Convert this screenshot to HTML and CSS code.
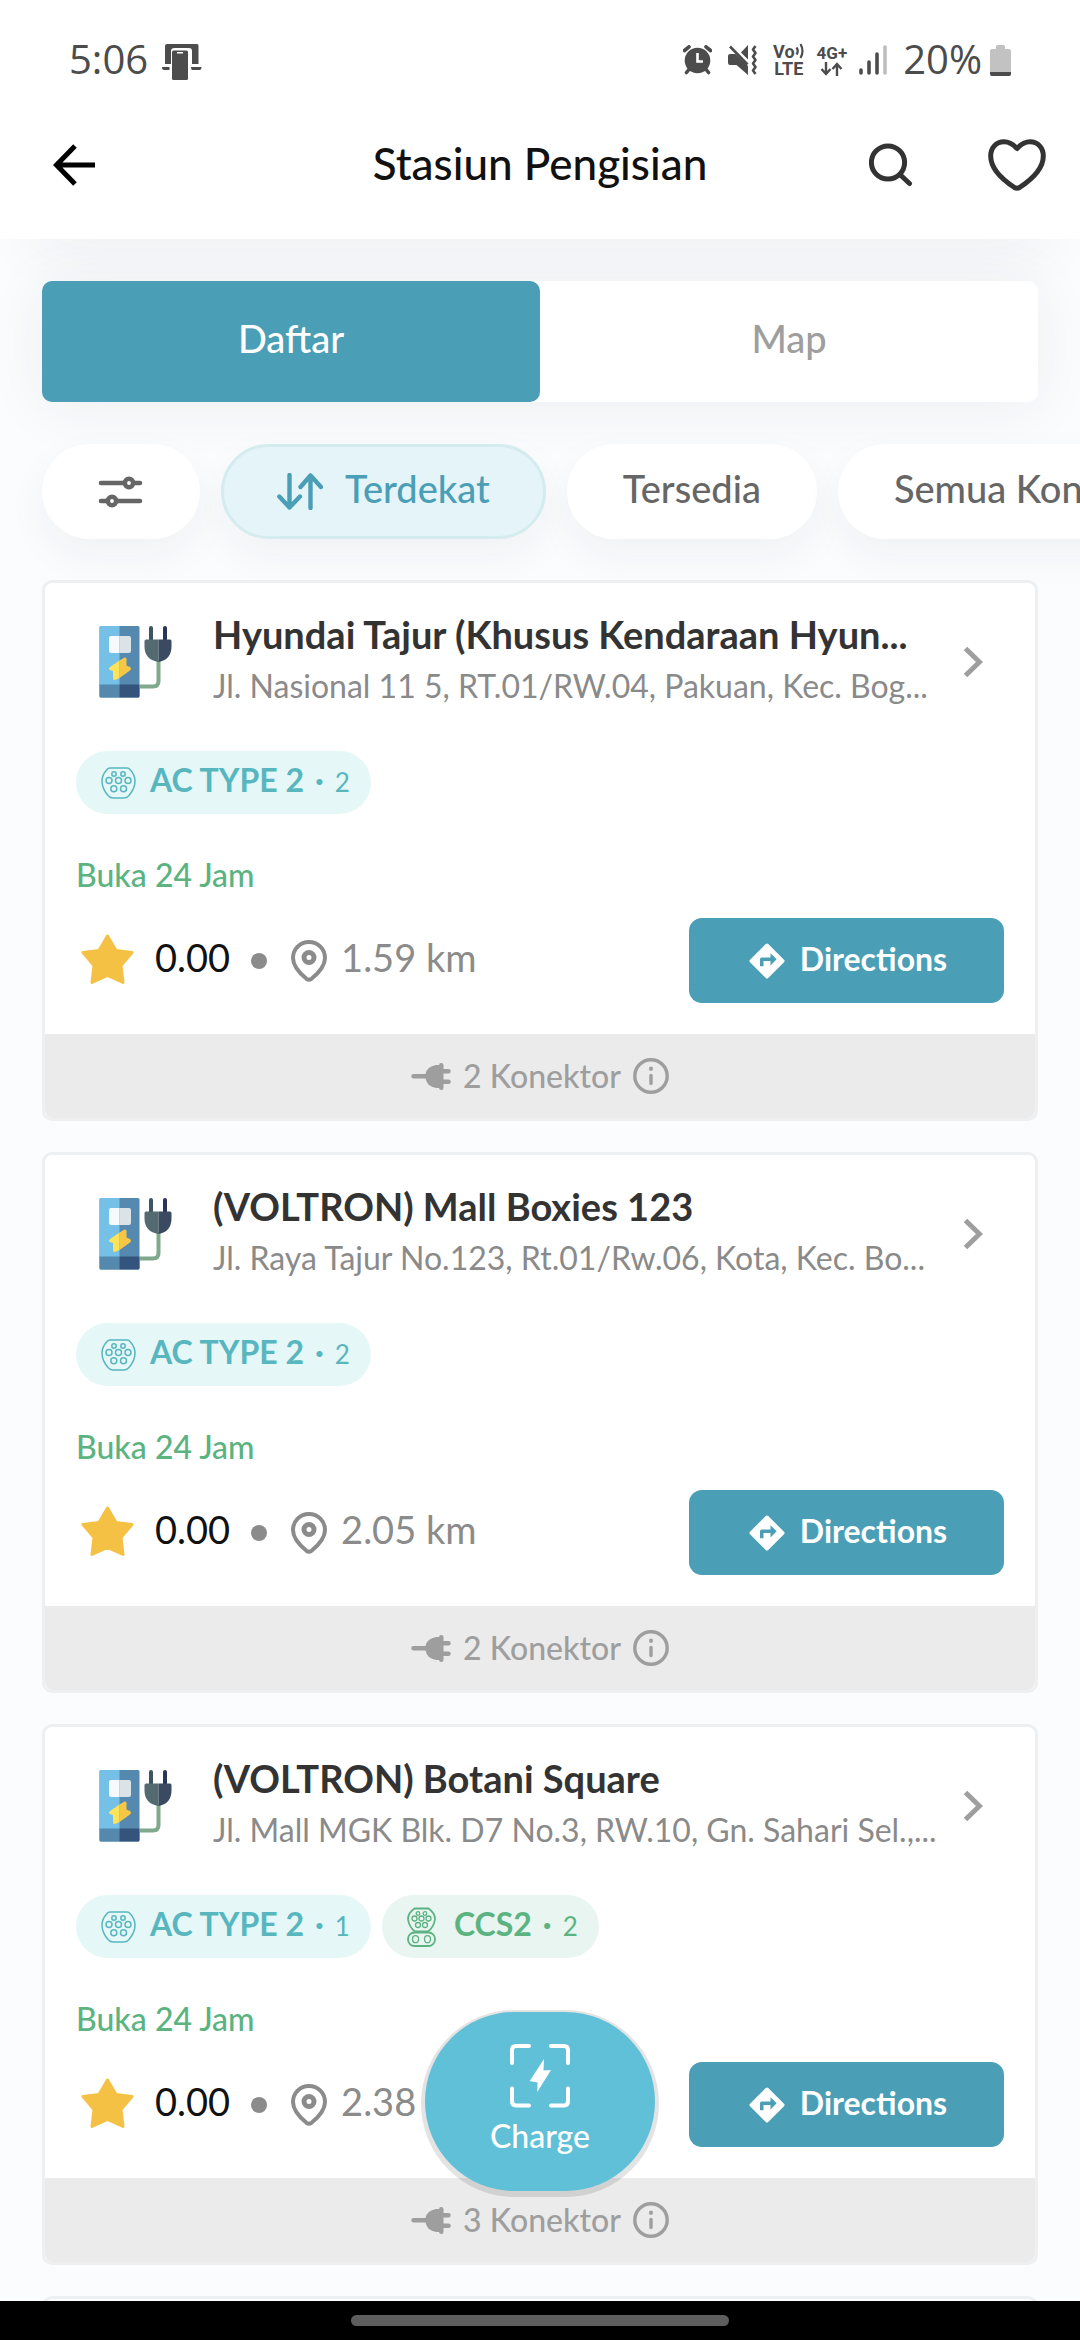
FILE: index.html
```html
<!DOCTYPE html>
<html lang="id">
<head>
<meta charset="utf-8">
<meta name="viewport" content="width=device-width, initial-scale=1">
<title>Stasiun Pengisian</title>
<link rel="stylesheet" href="styles.css">
</head>
<body>
<svg class="sprite" aria-hidden="true">
  <symbol id="i-station" viewBox="0 0 73 72">
    <rect x="0.5" width="40" height="71.5" rx="1.5" fill="#5589b0"/>
    <path d="M2 0H20.5V60H.5V1.5Q.5 0 2 0Z" fill="#74c0e6"/>
    <path d="M.5 58.5H20.5V71.5H2Q.5 71.5 .5 70Z" fill="#5489ad"/>
    <path d="M20.5 58.5H40.5V70Q40.5 71.5 39 71.5H20.5Z" fill="#34547d"/>
    <path d="M12 10H20.5V27H12Q10 27 10 25V12Q10 10 12 10Z" fill="#f7fafc"/>
    <path d="M20.5 10H30Q32 10 32 12V25Q32 27 30 27H20.5Z" fill="#dbe3e6"/>
    <path d="M20.5 34.5V52L16 54Q14 54.500 14 52V45L11 44Q9 43 11 41Z" fill="#fbe45c"/>
    <path d="M20.500 34.500L25.500 31.500Q27.500 31 27.500 33V39.500L31 41Q33 42.500 31 44.500L20.500 52Z" fill="#f5c745"/>
    <path d="M41 60.500H54Q59.500 60.500 59.500 55V34" fill="none" stroke="#7fa88c" stroke-width="4"/>
    <path d="M52 2V15" stroke="#3e5463" stroke-width="4" stroke-linecap="round"/>
    <path d="M66 2V15" stroke="#2b3558" stroke-width="4" stroke-linecap="round"/>
    <path d="M47 13.500H59.500V36Q46 34 45.500 21V15Q45.500 13.500 47 13.500Z" fill="#536b70"/>
    <path d="M59.500 13.500H71Q72.500 13.500 72.500 15V21Q72 34 59.500 36Z" fill="#3a4a60"/>
  </symbol>
  <symbol id="i-type2" viewBox="0 0 35 32">
    <g fill="none" stroke="currentColor" stroke-width="1.500">
      <path d="M9 1H26Q28 1 29 2.500Q34 8 34 14Q34 22 27.500 29Q25.500 31 23 31H12Q9.500 31 7.500 29Q1 22 1 14Q1 8 6 2.500Q7 1 9 1Z"/>
      <circle cx="13" cy="7" r="2.200"/><circle cx="22" cy="7" r="2.200"/>
      <circle cx="8" cy="13.500" r="3"/><circle cx="17.500" cy="13.500" r="3"/><circle cx="27" cy="13.500" r="3"/>
      <circle cx="12.800" cy="21.800" r="3"/><circle cx="22.500" cy="21.800" r="3"/>
    </g>
  </symbol>
  <symbol id="i-ccs2" viewBox="0 0 29 40">
    <g fill="none" stroke="currentColor" stroke-width="1.300">
      <path stroke-width="1.800" d="M7.500 1.500H21.500Q28 6 28 12Q27 20 21 24.500H8Q2 20 1 12Q1 6 7.500 1.500Z"/>
      <circle cx="11" cy="6.500" r="1.800"/><circle cx="18" cy="6.500" r="1.800"/>
      <circle cx="7.500" cy="11.500" r="2.500"/><circle cx="14.500" cy="11.500" r="2.500"/><circle cx="21.500" cy="11.500" r="2.500"/>
      <circle cx="11" cy="18" r="2.500"/><circle cx="18" cy="18" r="2.500"/>
      <rect stroke-width="1.800" x="1" y="25.500" width="27" height="13.500" rx="6.500"/>
      <ellipse cx="8.500" cy="32.200" rx="3" ry="3.500"/><ellipse cx="20.500" cy="32.200" rx="3" ry="3.500"/>
    </g>
  </symbol>
  <symbol id="i-star" viewBox="0 0 53 52">
    <path d="M26.500 3L35 17.500L51 19.500L40 32.500L42 49.500L26.500 42.500L11 49.500L13 32.500L2 19.500L18 17.500Z" fill="#f4c145" stroke="#f4c145" stroke-width="3" stroke-linejoin="round"/>
  </symbol>
  <symbol id="i-pin" viewBox="0 0 36 42">
    <path d="M18 2C9 2 2 9 2 18C2 26 9 33.500 15.500 38.800Q18 40.500 20.500 38.800C27 33.500 34 26 34 18C34 9 27 2 18 2Z" fill="none" stroke="currentColor" stroke-width="4"/>
    <circle cx="18" cy="17.500" r="5" fill="none" stroke="currentColor" stroke-width="5"/>
  </symbol>
  <symbol id="i-directions" viewBox="0 0 24 24">
    <path fill="currentColor" d="M21.710 11.290l-9-9a.996.996 0 0 0-1.410 0l-9 9a.996.996 0 0 0 0 1.410l9 9c.39.39 1.020.39 1.410 0l9-9a.996.996 0 0 0 0-1.410zM14 14.500V12h-4v3H8v-4c0-.55.45-1 1-1h5V7.500l3.500 3.500-3.500 3.500z"/>
  </symbol>
  <symbol id="i-plug" viewBox="0 0 40 27">
    <path d="M28 2V25H25Q16 23.500 14.500 15.500H2.500A2.200 2.200 0 0 1 2.500 11H14.500Q16 3.500 25 2Z" fill="currentColor"/>
    <rect x="28" width="4.500" height="27" rx="2.200" fill="currentColor"/>
    <path d="M30 8.200H37.500M30 18.800H37.500" stroke="currentColor" stroke-width="4.500" stroke-linecap="round"/>
  </symbol>
  <symbol id="i-info" viewBox="0 0 36 36">
    <circle cx="18" cy="18" r="16.200" fill="none" stroke="currentColor" stroke-width="3.400"/>
    <path d="M18 17.500V25.500" stroke="currentColor" stroke-width="3.400" stroke-linecap="round"/>
    <rect x="16.200" y="8.800" width="3.600" height="4" rx="1" fill="currentColor"/>
  </symbol>
  <symbol id="i-chevron" viewBox="0 0 20 32">
    <path d="M2.500 2.500L16.500 16L2.500 29.500" fill="none" stroke="currentColor" stroke-width="5"/>
  </symbol>
</svg>

<div class="status">
  <span class="status-text">5:06</span>
  <svg class="status-device" width="40" height="36" viewBox="0 0 40 36" fill="#4c4c4c">
    <path d="M5 0H35Q36.500 0 36.500 1.500V20H30V7Q30 4 27 4H12.500Q9 4 9 7V20H3V2Q3 0 5 0Z"/>
    <rect x="10" y="6.500" width="16" height="29.500" rx="1.500"/>
    <rect x="15" y="8" width="6" height="1.500" fill="#fff"/>
    <path d="M0 23H7.500V26H2Q0 26 0 23ZM29 23H39.500Q39.500 26 37.500 26H30Q29 26 29 23Z"/>
  </svg>
  <div class="status-icons">
    <svg class="alarm" width="29" height="30" viewBox="0 0 29 30">
      <circle cx="14.500" cy="15.500" r="12.800" fill="#4c4c4c"/>
      <path d="M1.500 5.500L6 1.800M27.500 5.500L23 1.800M5.500 25L3.500 27.500M23.500 25L25.500 27.500" stroke="#4c4c4c" stroke-width="3.600" stroke-linecap="round"/>
      <path d="M14.500 8V16.500H20" fill="none" stroke="#fff" stroke-width="2.600"/>
    </svg>
    <svg class="mute" width="29" height="30" viewBox="0 0 29 30">
      <path d="M13 7.500L20 0V14.500ZM2 9H7.500L20 21V30L8.500 20H2Q0 20 0 18V11Q0 9 2 9Z" fill="#4c4c4c"/>
      <path d="M2 1.500L19.500 19.500" stroke="#4c4c4c" stroke-width="2.600"/>
      <path d="M27.500 1L25 4.500L27.500 8L25 11.500L27.500 15L25 18.500L27.500 22L25 25.500L27.500 29" fill="none" stroke="#4c4c4c" stroke-width="2.600" stroke-linejoin="round"/>
    </svg>
    <span class="net volte">
      <span class="net-line">Vo<svg width="10" height="16" viewBox="0 0 10 16"><path d="M1.500 4.500Q4 8 1.500 11.500M5.500 1Q9.500 8 5.500 15" fill="none" stroke="#4c4c4c" stroke-width="2.200"/></svg></span>
      <span class="net-line">LTE</span>
    </span>
    <span class="net lte">
      <span class="net-line">4G+</span>
      <svg width="23" height="14" viewBox="0 0 23 14"><path d="M6 0V12M1.500 7L6 12L10.500 7M17 14V2M12.500 7L17 2L21.500 7" fill="none" stroke="#4c4c4c" stroke-width="2.400"/></svg>
    </span>
    <svg class="signal" width="28" height="30" viewBox="0 0 28 30">
      <path d="M2 25V28M10 17V28M18 9V28" stroke="#4c4c4c" stroke-width="3.600" stroke-linecap="round"/>
      <path d="M26 2V28" stroke="#bdbdbd" stroke-width="3.600" stroke-linecap="round"/>
    </svg>
    <span class="status-text">20%</span>
    <svg class="battery" width="21" height="31" viewBox="0 0 21 31">
      <path d="M7.500 0H13.500Q15 0 15 1.500V4H19Q21 4 21 6V29Q21 31 19 31H2Q0 31 0 29V6Q0 4 2 4H6V1.500Q6 0 7.500 0Z" fill="#c2c2c2"/>
      <path d="M0 27H21V29Q21 31 19 31H2Q0 31 0 29Z" fill="#4c4c4c"/>
    </svg>
  </div>
</div>

<header class="appbar">
  <button class="icon-btn" aria-label="Kembali"><svg width="42" height="42" viewBox="0 0 42 42"><path d="M22 2L3.500 21L22 40M4 21H42" fill="none" stroke="#000" stroke-width="5"/></svg></button>
  <h1 class="title">Stasiun Pengisian</h1>
  <div class="actions">
    <button class="icon-btn" aria-label="Cari"><svg width="44" height="44" viewBox="0 0 44 44"><g fill="none" stroke="#333" stroke-width="5"><circle cx="19" cy="19.500" r="16.600"/><path d="M31.500 32L40.500 40.500" stroke-linecap="round"/></g></svg></button>
    <button class="icon-btn" aria-label="Favorit"><svg width="58" height="52" viewBox="0 0 58 52"><path d="M29 9.500C25 5 21 2.700 16 2.700C8 2.700 2.700 9 2.700 17C2.700 30 15 41 26.500 48.500Q29 50 31.500 48.500C43 41 55.300 30 55.300 17C55.300 9 50 2.700 42 2.700C37 2.700 33 5 29 9.500Z" fill="none" stroke="#333" stroke-width="5" stroke-linejoin="round"/></svg></button>
  </div>
</header>

<main class="content">
  <div class="tabs">
    <button class="tab tab-active">Daftar</button>
    <button class="tab">Map</button>
  </div>

  <div class="chips">
    <button class="chip" aria-label="Filter"><svg width="46" height="32" viewBox="0 0 46 32"><g fill="#fff" stroke="#666" stroke-width="4.600" stroke-linecap="round"><path d="M3 7H42M3 25H42"/><circle cx="31" cy="7" r="4.200"/><circle cx="14" cy="25" r="4.200"/></g></svg></button>
    <button class="chip chip-active"><svg width="46" height="37" viewBox="0 0 46 37"><path d="M12.500 2V34.500M2.300 23.500L12.500 34.500L23 23.500M33.500 35V2.500M23.500 14L33.500 2.500L44 14" fill="none" stroke="currentColor" stroke-width="4.400" stroke-linecap="round" stroke-linejoin="round"/></svg><span class="chip-label">Terdekat</span></button>
    <button class="chip"><span class="chip-label">Tersedia</span></button>
    <button class="chip"><span class="chip-label">Semua Konektor</span></button>
  </div>

  <section class="list">
    <article class="card">
      <div class="card-body">
        <a class="card-head" href="#">
          <svg class="station" width="73" height="72"><use href="#i-station"/></svg>
          <div class="card-text">
            <h2 class="name">Hyundai Tajur (Khusus Kendaraan Hyun...</h2>
            <p class="address">Jl. Nasional 11 5, RT.01/RW.04, Pakuan, Kec. Bog...</p>
          </div>
          <svg class="chevron" width="20" height="32"><use href="#i-chevron"/></svg>
        </a>
        <div class="badges">
          <span class="badge badge-ac"><svg width="35" height="32"><use href="#i-type2"/></svg><span class="badge-label"><b>AC TYPE 2</b><b>·</b><span>2</span></span></span>
        </div>
        <p class="hours">Buka 24 Jam</p>
        <div class="meta">
          <svg class="star" width="53" height="52"><use href="#i-star"/></svg>
          <span class="rating">0.00</span>
          <span class="dot"></span>
          <svg class="pin" width="36" height="42"><use href="#i-pin"/></svg>
          <span class="distance">1.59 km</span>
          <button class="directions"><svg width="42" height="42"><use href="#i-directions"/></svg><span class="directions-label">Directions</span></button>
        </div>
      </div>
      <footer class="card-foot"><svg width="40" height="27"><use href="#i-plug"/></svg><span>2 Konektor</span><svg width="36" height="36"><use href="#i-info"/></svg></footer>
    </article>

    <article class="card">
      <div class="card-body">
        <a class="card-head" href="#">
          <svg class="station" width="73" height="72"><use href="#i-station"/></svg>
          <div class="card-text">
            <h2 class="name">(VOLTRON) Mall Boxies 123</h2>
            <p class="address">Jl. Raya Tajur No.123, Rt.01/Rw.06, Kota, Kec. Bo...</p>
          </div>
          <svg class="chevron" width="20" height="32"><use href="#i-chevron"/></svg>
        </a>
        <div class="badges">
          <span class="badge badge-ac"><svg width="35" height="32"><use href="#i-type2"/></svg><span class="badge-label"><b>AC TYPE 2</b><b>·</b><span>2</span></span></span>
        </div>
        <p class="hours">Buka 24 Jam</p>
        <div class="meta">
          <svg class="star" width="53" height="52"><use href="#i-star"/></svg>
          <span class="rating">0.00</span>
          <span class="dot"></span>
          <svg class="pin" width="36" height="42"><use href="#i-pin"/></svg>
          <span class="distance">2.05 km</span>
          <button class="directions"><svg width="42" height="42"><use href="#i-directions"/></svg><span class="directions-label">Directions</span></button>
        </div>
      </div>
      <footer class="card-foot"><svg width="40" height="27"><use href="#i-plug"/></svg><span>2 Konektor</span><svg width="36" height="36"><use href="#i-info"/></svg></footer>
    </article>

    <article class="card">
      <div class="card-body">
        <a class="card-head" href="#">
          <svg class="station" width="73" height="72"><use href="#i-station"/></svg>
          <div class="card-text">
            <h2 class="name">(VOLTRON) Botani Square</h2>
            <p class="address">Jl. Mall MGK Blk. D7 No.3, RW.10, Gn. Sahari Sel.,...</p>
          </div>
          <svg class="chevron" width="20" height="32"><use href="#i-chevron"/></svg>
        </a>
        <div class="badges">
          <span class="badge badge-ac"><svg width="35" height="32"><use href="#i-type2"/></svg><span class="badge-label"><b>AC TYPE 2</b><b>·</b><span>1</span></span></span>
          <span class="badge badge-ccs"><svg width="29" height="40"><use href="#i-ccs2"/></svg><span class="badge-label"><b>CCS2</b><b>·</b><span>2</span></span></span>
        </div>
        <p class="hours">Buka 24 Jam</p>
        <div class="meta">
          <svg class="star" width="53" height="52"><use href="#i-star"/></svg>
          <span class="rating">0.00</span>
          <span class="dot"></span>
          <svg class="pin" width="36" height="42"><use href="#i-pin"/></svg>
          <span class="distance">2.38 km</span>
          <button class="directions"><svg width="42" height="42"><use href="#i-directions"/></svg><span class="directions-label">Directions</span></button>
        </div>
      </div>
      <footer class="card-foot"><svg width="40" height="27"><use href="#i-plug"/></svg><span>3 Konektor</span><svg width="36" height="36"><use href="#i-info"/></svg></footer>
    </article>

    <article class="card card-next"></article>
  </section>

  <button class="charge">
    <svg width="60" height="64" viewBox="0 0 60 64">
      <path d="M2 19V6Q2 2 6 2H19M41 2H54Q58 2 58 6V19M2 44.500V57Q2 61.500 6 61.500H19M41 61.500H54Q58 61.500 58 57V44.500" fill="none" stroke="#fff" stroke-width="4" stroke-linecap="round"/>
      <path d="M34 15L19.700 37L27.500 38.500L27.300 48L41 26L33.500 26.500Z" fill="#fff"/>
    </svg>
    <span>Charge</span>
  </button>
</main>

<div class="navbar"><span class="handle"></span></div>
</body>
</html>
```
FILE: styles.css
```css
* {
  box-sizing: border-box;
}

body {
  display: flex;
  flex-direction: column;
  height: 100vh;
  margin: 0;
  overflow: hidden;
  background: #fbfcfe;
  color: #111;
  font-family: Lato, "Open Sans", sans-serif;
  font-size: 32px;
  line-height: 40px;
}

h1, h2, p {
  margin: 0;
}

button {
  padding: 0;
  border: 0;
  background: none;
  color: inherit;
  font: inherit;
}

svg {
  display: block;
  flex: none;
}

.sprite {
  position: absolute;
  width: 0;
  height: 0;
}

/* System status bar */
.status {
  display: flex;
  align-items: center;
  flex: none;
  height: 120px;
  padding: 0 69px;
  background: #fff;
  color: #4c4c4c;
}

.status-text {
  padding-bottom: 2px;
  font: 40px/48px "Open Sans", sans-serif;
}

.status-device {
  margin: 4px 0 0 14px;
}

.status-icons {
  display: flex;
  align-items: center;
  margin-left: auto;
}

.mute {
  margin-left: 16px;
}

.net {
  display: flex;
  flex-direction: column;
  align-items: center;
  font: 700 18px/17px Roboto, sans-serif;
}

.net-line {
  display: flex;
}

.volte {
  margin-left: 16px;
}

.lte {
  margin-left: 12px;
  font-size: 17px;
}

.signal {
  margin: 0 16px 0 12px;
}

.battery {
  margin-left: 8px;
}

/* App bar */
.appbar {
  display: grid;
  grid-template-columns: 1fr auto 1fr;
  align-items: center;
  flex: none;
  height: 119px;
  padding: 0 34px 29px 53px;
  background: #fff;
  box-shadow: 0 40px 60px -30px rgba(30, 40, 50, 0.06);
}

.title {
  padding: 0 19px 4px 0;
  font-size: 44px;
  font-weight: 500;
  line-height: 52px;
}

.actions {
  display: flex;
  align-items: center;
  justify-content: flex-end;
  gap: 75px;
}

/* Scrolling content */
.content {
  position: relative;
  flex: 1;
  min-height: 0;
  padding: 42px;
  overflow: hidden;
}

.tabs {
  display: flex;
  border-radius: 10px;
  background: #fff;
  box-shadow: 0 4px 60px rgba(30, 40, 50, 0.07);
}

.tab {
  flex: 1;
  height: 121px;
  padding-bottom: 8px;
  border-radius: 10px;
  color: #9e9e9e;
  font-size: 38px;
  font-weight: 500;
}

.tab-active {
  background: #4a9eb6;
  color: #fff;
}

.chips {
  display: flex;
  gap: 21px;
  margin-top: 42px;
}

.chip {
  display: flex;
  align-items: center;
  flex: none;
  gap: 22px;
  height: 95px;
  padding: 0 56px;
  border-radius: 48px;
  background: #fff;
  box-shadow: 0 16px 40px rgba(30, 40, 50, 0.05);
  color: #666;
  font-size: 38px;
  font-weight: 500;
}

.chip-active {
  padding: 0 53px;
  border: 3px solid #d5ecef;
  background: #e5f4f9;
  color: #4a9eb6;
}

.chip-label {
  padding-bottom: 8px;
}

/* Station cards */
.list {
  display: flex;
  flex-direction: column;
  gap: 31px;
  margin-top: 41px;
}

.card {
  border: 3px solid #eeeff0;
  border-radius: 10px;
  background: #fff;
}

.card-next {
  min-height: 60px;
}

.card-body {
  padding: 27px 31px 31px;
}

.card-head {
  display: flex;
  align-items: center;
  color: inherit;
  text-decoration: none;
}

.station {
  margin: 4px 41px 0 23px;
}

.card-text {
  flex: 1;
  min-width: 0;
}

.name {
  color: #333;
  font-size: 38px;
  font-weight: 700;
  line-height: 48px;
  white-space: nowrap;
}

.address {
  margin-top: 4px;
  color: #8a8a8a;
  line-height: 48px;
  white-space: nowrap;
}

.chevron {
  margin: 4px 21px 0 0;
  color: #9e9e9e;
}

.badges {
  display: flex;
  gap: 11px;
  margin-top: 41px;
}

.badge {
  display: flex;
  align-items: center;
  gap: 14px;
  height: 63px;
  padding: 0 21px 0 25px;
  border-radius: 32px;
  font-size: 26px;
}

.badge b {
  font-size: 32px;
}

.badge-label {
  display: flex;
  align-items: baseline;
  gap: 11px;
  padding-bottom: 4px;
}

.badge-ac {
  background: #e6f7f8;
  color: #57b6be;
}

.badge-ccs {
  gap: 18px;
  background: #e8f5f0;
  color: #5bb381;
}

.hours {
  margin-top: 41px;
  color: #5bb381;
  font-weight: 500;
}

.meta {
  display: flex;
  align-items: center;
  margin-top: 23px;
  padding-left: 5px;
  font-size: 38px;
}

.star {
  margin-bottom: 4px;
}

.rating {
  margin-left: 21px;
  padding-bottom: 8px;
}

.dot {
  width: 16px;
  height: 16px;
  margin: 0 24px 0 21px;
  border-radius: 50%;
  background: #8a8b8a;
}

.pin {
  color: #8a8b8a;
}

.distance {
  margin-left: 14px;
  padding-bottom: 8px;
  color: #8a8b8a;
}

.directions {
  display: flex;
  align-items: center;
  justify-content: center;
  gap: 12px;
  width: 315px;
  height: 85px;
  margin-left: auto;
  border-radius: 13px;
  background: #4a9eb6;
  color: #fff;
  font-size: 32px;
  font-weight: 700;
}

.directions-label {
  padding-bottom: 4px;
}

.card-foot {
  display: flex;
  align-items: center;
  justify-content: center;
  gap: 12px;
  height: 84px;
  border-radius: 0 0 8px 8px;
  background: #ebebeb;
  color: #9e9e9e;
  font-weight: 500;
}

/* Floating charge button */
.charge {
  position: absolute;
  bottom: 110px;
  left: 50%;
  display: flex;
  flex-direction: column;
  align-items: center;
  gap: 8px;
  width: 230px;
  height: 179px;
  margin-left: -115px;
  padding-top: 32px;
  border-radius: 90px;
  background: #5fc0d8;
  box-shadow: 0 2px 0 4px rgba(0, 0, 0, 0.11);
  color: #fff;
  font-weight: 500;
}

/* System navigation bar */
.navbar {
  display: flex;
  align-items: center;
  justify-content: center;
  flex: none;
  height: 39px;
  background: #000;
}

.handle {
  width: 35%;
  height: 11px;
  border-radius: 6px;
  background: #5e5e5e;
}
```
